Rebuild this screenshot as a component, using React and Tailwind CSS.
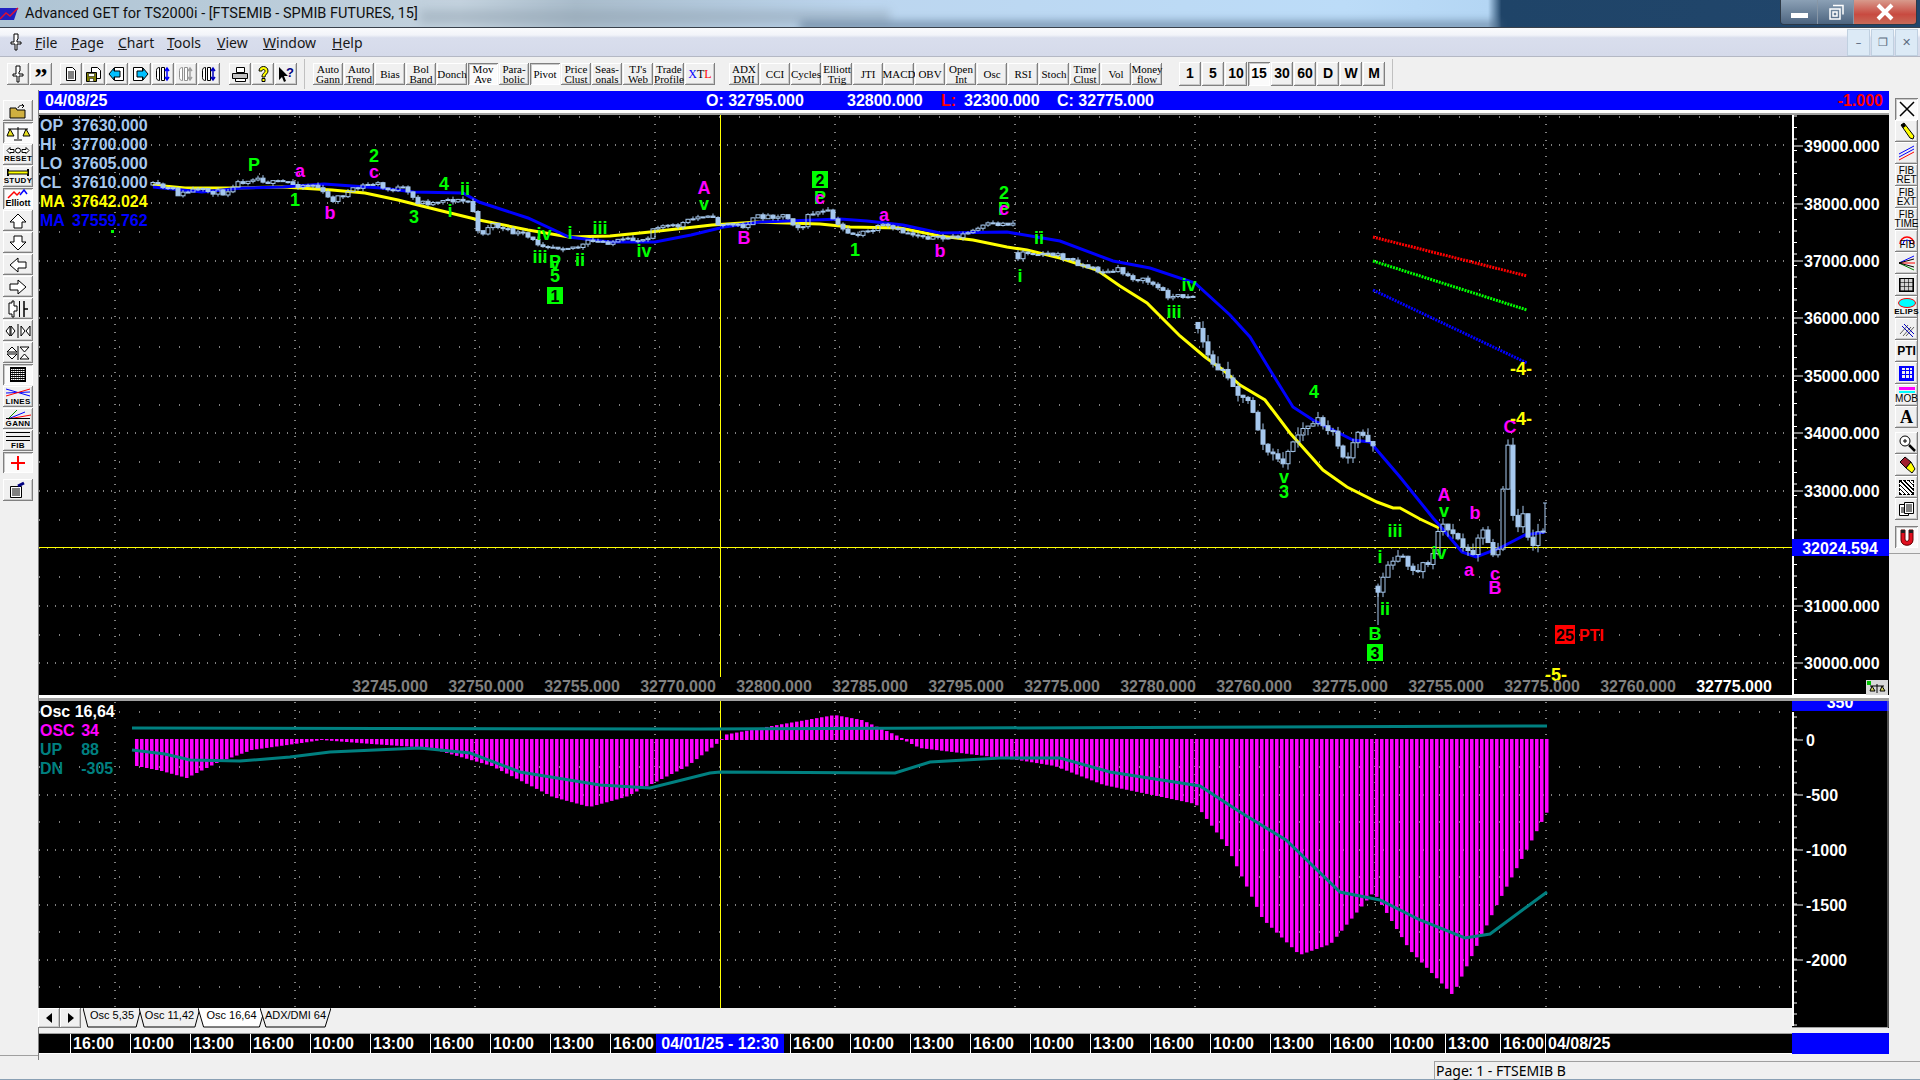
import React from "react";

const raised = "flex items-center justify-center bg-[#f0f0f0] shadow-[inset_-1px_-1px_0_#808080,inset_1px_1px_0_#ffffff,inset_-2px_-2px_0_#c8c8c8]";
const sunken = "flex items-center justify-center bg-[#fbfbfb] shadow-[inset_1px_1px_0_#808080,inset_-1px_-1px_0_#ffffff,inset_2px_2px_0_#c8c8c8]";

// price path of the candles, page pixels
const pricePath = [
  [153,185],[173,190],[179,195],[193,190],[226,193],[232,185],[255,177],[271,183],[287,182],[295,185],[316,185],[326,197],[332,200],[349,192],[365,185],[377,183],[385,190],[402,188],[412,197],[418,202],[434,203],[442,199],[471,202],[475,220],[479,237],[491,223],[504,230],[524,235],[536,243],[557,247],[581,247],[587,242],[610,242],[646,239],[655,225],[675,227],[695,218],[708,214],[716,223],[744,226],[757,217],
  [785,215],[793,223],[802,228],[810,213],[830,212],[835,223],[840,228],[855,235],[867,232],[883,226],[903,232],[940,239],[963,235],[987,225],[1014,223],[1015,263],[1022,252],[1043,253],[1055,255],[1070,260],[1090,268],[1107,273],[1118,270],[1130,277],[1150,282],[1170,297],[1194,295],
  [1195,323],[1200,332],[1205,348],[1210,360],[1215,368],[1225,372],[1230,378],[1235,390],[1240,397],[1250,403],[1255,417],[1260,437],[1265,450],[1270,453],[1275,457],[1280,462],[1285,462],[1290,447],[1295,438],[1300,432],[1305,427],[1310,427],[1315,420],[1320,420],[1325,430],[1330,428],[1335,437],[1340,450],[1345,460],[1350,460],[1355,433],[1360,433],[1365,437],[1375,447],
  [1376,598],[1380,583],[1390,563],[1400,552],[1406,565],[1417,573],[1421,563],[1431,563],[1435,542],[1441,523],[1447,530],[1455,533],[1462,545],[1472,557],[1476,538],[1484,530],[1490,547],[1496,562],[1500,532],[1506,445],[1511,443],[1513,517],[1517,528],[1525,506],[1529,547],[1535,547],[1539,527],[1545,532],
];
const yellowLine = [[153,185],[185,188],[230,188],[283,187],[332,190],[365,193],[398,200],[438,210],[479,220],[528,230],[569,237],[610,236],[650,232],[712,225],[757,222],[820,224],[850,227],[900,228],[940,236],[973,240],[1007,247],[1027,250],[1060,258],[1097,270],[1120,286],[1147,303],[1180,336],[1205,357],[1223,370],[1240,385],[1265,400],[1290,433],[1323,470],[1347,487],[1377,502],[1393,508],[1400,508],[1420,519],[1439,528]];
const blueLine = [[153,187],[202,192],[242,188],[283,187],[324,184],[381,188],[414,192],[463,193],[479,202],[528,218],[569,237],[610,242],[655,242],[691,235],[724,227],[760,222],[840,219],[867,221],[903,225],[940,233],[1007,232],[1060,241],[1113,261],[1150,268],[1195,283],[1230,315],[1250,337],[1270,370],[1293,407],[1313,420],[1353,440],[1370,442],[1400,477],[1433,518],[1441,527],[1462,552],[1476,557],[1500,548],[1525,535],[1545,532]];
const oscBottom = [[135,765],[160,770],[185,777],[195,772],[215,762],[250,749],[300,742],[320,739],[370,743],[428,747],[490,765],[551,796],[588,806],[624,796],[686,765],[720,739],[722,735],[770,726],[833,715],[860,720],[894,735],[918,747],[1016,759],[1053,765],[1102,784],[1194,803],[1225,845],[1261,918],[1298,954],[1329,943],[1372,891],[1408,949],[1451,994],[1494,906],[1547,808]];
const tealLow = [[132,750],[165,754],[190,760],[240,761],[290,757],[330,752],[420,748],[470,753],[520,772],[600,785],[650,788],[710,773],[720,772],[895,773],[930,762],[1000,758],[1060,758],[1110,772],[1200,786],[1240,812],[1286,840],[1340,892],[1380,900],[1420,920],[1465,938],[1490,934],[1547,892]];

const interp = (pts, x) => {
  for (let i = 1; i < pts.length; i++) {
    if (x <= pts[i][0]) {
      const [x0, y0] = pts[i - 1];
      const [x1, y1] = pts[i];
      return y0 + ((y1 - y0) * (x - x0)) / (x1 - x0);
    }
  }
  return pts[pts.length - 1][1];
};
const toPoints = (pts) => pts.map((p) => p.join(",")).join(" ");

let seed = 11;
const rnd = () => {
  seed = (seed * 16807) % 2147483647;
  return seed / 2147483647;
};

// the price opens away from the last close at these candles
const gapCandles = [1018, 1198, 1378];

const candles = [];
for (let x = 153, prev = 185; x <= 1545; x += 5) {
  const close = interp(pricePath, x) + (rnd() - 0.5) * 5;
  const open = gapCandles.includes(x) ? close - 6 : prev;
  const up = close < open;
  const top = Math.min(open, close);
  const bottom = Math.max(open, close);
  const scale = x > 1195 ? 8 : 3;
  candles.push({ x, up, top, bottom, hi: top - rnd() * scale, lo: bottom + rnd() * scale });
  prev = close;
}

const oscBars = [];
for (let x = 135; x <= 1545; x += 5) oscBars.push({ x, y: interp(oscBottom, x) });

const waveLabels = [
  ["P",254,165,"#00ff00"],["a",300,171,"#ff00ff"],["1",295,200,"#00ff00"],["2",374,156,"#00ff00"],["c",374,172,"#ff00ff"],["b",330,213,"#ff00ff"],["3",414,217,"#00ff00"],["4",444,184,"#00ff00"],["ii",465,189,"#00ff00"],["i",450,211,"#00ff00"],["iv",544,234,"#00ff00"],["i",570,233,"#00ff00"],["iii",540,257,"#00ff00"],["P",555,262,"#00ff00"],["v",555,264,"#00ff00"],["5",555,276,"#00ff00"],["ii",580,260,"#00ff00"],["iii",600,228,"#00ff00"],["iv",644,251,"#00ff00"],["A",704,188,"#ff00ff"],["v",704,204,"#00ff00"],["B",744,238,"#ff00ff"],
  ["P",820,198,"#00ff00"],["c",820,198,"#ff00ff"],["a",884,215,"#ff00ff"],["1",855,250,"#00ff00"],["b",940,251,"#ff00ff"],["2",1004,193,"#00ff00"],["P",1004,209,"#00ff00"],["c",1004,209,"#ff00ff"],["ii",1039,238,"#00ff00"],["i",1020,276,"#00ff00"],["iv",1189,285,"#00ff00"],["iii",1174,312,"#00ff00"],
  ["4",1314,392,"#00ff00"],["v",1284,477,"#00ff00"],["3",1284,492,"#00ff00"],["A",1444,495,"#ff00ff"],["v",1444,511,"#00ff00"],["b",1475,513,"#ff00ff"],["C",1510,427,"#ff00ff"],
  ["iii",1395,531,"#00ff00"],["i",1380,557,"#00ff00"],["iv",1439,553,"#00ff00"],["a",1469,570,"#ff00ff"],["c",1495,574,"#ff00ff"],["B",1495,588,"#ff00ff"],["ii",1385,609,"#00ff00"],["B",1375,634,"#00ff00"],
  ["-4-",1521,369,"#ffff00"],["-4-",1521,419,"#ffff00"],["-5-",1556,675,"#ffff00"],
];
const priceRow = ["32745","32750","32755","32770","32800","32785","32795","32775","32780","32760","32775","32755","32775","32760"];
const gridX = [115, 295, 475, 655, 835, 1015, 1195, 1375, 1546];

const Grid = ({ majors, minors, top, bottom }) => (
  <g stroke="#ffffff" strokeWidth="1">
    {majors.map((y) => <line key={y} x1="39" x2="1790" y1={y} y2={y} strokeDasharray="1 7" />)}
    {minors.map((y) => <line key={y} x1="39" x2="1790" y1={y} y2={y} strokeDasharray="1 19" />)}
    {gridX.map((x) => <line key={x} x1={x} x2={x} y1={top} y2={bottom} strokeDasharray="1 7" />)}
  </g>
);

const MainChart = () => (
  <svg width="1753" height="580" viewBox="39 115 1753 580" className="block bg-black font-bold text-[16px]">
    <Grid majors={[145,203,261,318,376,433,491,548,606,663]} minors={[117,174,232,290,347,405,462,520,577,635]} top={116} bottom={677} />
    <line x1="720.5" x2="720.5" y1="115" y2="677" stroke="#ffff00" />
    <line x1="39" x2="1792" y1="547.5" y2="547.5" stroke="#ffff00" />
    <polyline points="1373,237 1527,276" fill="none" stroke="#ff0000" strokeWidth="3" strokeDasharray="2 1" />
    <polyline points="1373,261 1527,310" fill="none" stroke="#00ff00" strokeWidth="3" strokeDasharray="2 1" />
    <polyline points="1373,290 1527,363" fill="none" stroke="#0000ff" strokeWidth="3" strokeDasharray="2 1" />
    <polyline points={toPoints(yellowLine)} fill="none" stroke="#ffff00" strokeWidth="3" />
    <polyline points={toPoints(blueLine)} fill="none" stroke="#0000ff" strokeWidth="3" />
    {candles.map((c) => (
      <g key={c.x} stroke="#a6c8ee">
        <line x1={c.x} x2={c.x} y1={c.hi} y2={c.top} />
        <line x1={c.x} x2={c.x} y1={c.bottom} y2={c.lo} />
        <rect x={c.x - 2} y={c.top} width="4" height={Math.max(c.bottom - c.top, 1)} fill={c.up ? "none" : "#a6c8ee"} />
      </g>
    ))}
    <line x1="1378" x2="1378" y1="590" y2="625" stroke="#a6c8ee" />
    <path d="M1545 532V503M1543 503H1547" stroke="#a6c8ee" fill="none" />
    {waveLabels.map(([t, x, y, fill], i) => (
      <text key={i} x={x} y={y} fill={fill} textAnchor="middle" dominantBaseline="central" className="text-[18px]">{t}</text>
    ))}
    <rect x="547" y="287" width="16" height="17" fill="#00ff00" />
    <text x="555" y="296" textAnchor="middle" dominantBaseline="central" fill="#000000">1</text>
    <rect x="812" y="171" width="16" height="17" fill="#00ff00" />
    <text x="820" y="180" textAnchor="middle" dominantBaseline="central" fill="#000000">2</text>
    <rect x="1367" y="644" width="16" height="17" fill="#00ff00" />
    <text x="1375" y="653" textAnchor="middle" dominantBaseline="central" fill="#000000">3</text>
    <rect x="1555" y="625" width="20" height="19" fill="#ff0000" />
    <text x="1565" y="635" textAnchor="middle" dominantBaseline="central" fill="#000000">25</text>
    <text x="1579" y="635" dominantBaseline="central" fill="#ff0000">PTI</text>
    <rect x="111" y="230" width="3" height="3" fill="#00ff00" />
    {priceRow.map((p, i) => (
      <text key={i} x={390 + i * 96} y="686" fill="#808080" textAnchor="middle" dominantBaseline="central">{p}.000</text>
    ))}
    <text x="1734" y="686" fill="#ffffff" textAnchor="middle" dominantBaseline="central">32775.000</text>
  </svg>
);

const AxisTicks = ({ from, to, step, major }) => {
  const out = [];
  for (let y = from; y <= to; y += step) out.push(y);
  return (
    <g stroke="#ffffff">
      {out.map((y) => <line key={y} x1="1793" x2="1797" y1={y} y2={y} />)}
      {major.map((y) => <line key={y} x1="1793" x2="1803" y1={y} y2={y} />)}
    </g>
  );
};

const MainAxis = () => (
  <svg width="97" height="580" viewBox="1792 115 97 580" className="block bg-black font-bold text-[16px]">
    <line x1="1793" x2="1793" y1="115" y2="695" stroke="#ffffff" strokeWidth="2" />
    <AxisTicks from={116} to={690} step={11.5} major={[146,204,261,318,376,433,491,606,663]} />
    {[[39000,146],[38000,204],[37000,261],[36000,318],[35000,376],[34000,433],[33000,491],[31000,606],[30000,663]].map(([v, y]) => (
      <text key={v} x="1804" y={y} fill="#ffffff" dominantBaseline="central">{v}.000</text>
    ))}
    <rect x="1792" y="539" width="97" height="17" fill="#0000ff" />
    <text x="1840" y="548" fill="#ffffff" textAnchor="middle" dominantBaseline="central">32024.594</text>
    <line x1="1792" x2="1866" y1="694.5" y2="694.5" stroke="#ffffff" />
    <rect x="1866" y="680" width="22" height="15" fill="#d8d8d8" />
    <rect x="1867" y="681" width="4" height="4" fill="#00c000" />
    <path d="M1870 686h14M1877 684v9M1872 686l-2 5h5zM1882 686l-2 5h5z" stroke="#000000" fill="#d0d060" strokeWidth="1" />
  </svg>
);

const OscChart = () => (
  <svg width="1753" height="307" viewBox="39 701 1753 307" className="block bg-black">
    <Grid majors={[795,850,905,960]} minors={[712,767,822,877,932,987]} top={702} bottom={1007} />
    <line x1="720.5" x2="720.5" y1="701" y2="1008" stroke="#ffff00" />
    {oscBars.map((b) => (
      <rect key={b.x} x={b.x} y={Math.min(739, b.y)} width="3.5" height={Math.abs(b.y - 739) + 1} fill="#ff00ff" />
    ))}
    <polyline points="132,728 700,729 1547,726" fill="none" stroke="#008080" strokeWidth="3" />
    <polyline points={toPoints(tealLow)} fill="none" stroke="#008080" strokeWidth="3" />
  </svg>
);

const OscAxis = () => (
  <svg width="97" height="327" viewBox="1792 701 97 327" className="block bg-black font-bold text-[16px]">
    <rect x="1792" y="701" width="97" height="10" fill="#0000ff" />
    <text x="1840" y="708" fill="#ffffff" textAnchor="middle">350</text>
    <line x1="1793" x2="1793" y1="712" y2="1026" stroke="#ffffff" strokeWidth="2" />
    <AxisTicks from={717} to={1025} step={11} major={[740,795,850,905,960]} />
    {[[0,740],[-500,795],[-1000,850],[-1500,905],[-2000,960]].map(([v, y]) => (
      <text key={v} x="1806" y={y} fill="#ffffff" dominantBaseline="central">{v}</text>
    ))}
    <path d="M1792 1027.5H1888V701" fill="none" stroke="#a0a0a0" />
  </svg>
);

const Ico = ({ children, w = 18, h = 16, vb }) => (
  <svg width={w} height={h} viewBox={vb || `0 0 ${w} ${h}`} className="block shrink-0">{children}</svg>
);
const PinGlyph = () => (
  <Ico w={12} h={18}><path d="M4 1h4v5l-1 1v2h4v2H7v6H5v-6H1V9h3V7L4 6z" fill="#ffffff" stroke="#000000" /></Ico>
);
const DocGlyph = () => (
  <Ico w={12} h={16}><path d="M1.5 1.5h6l3 3v10h-9z" fill="#ffffff" stroke="#000000" /><path d="M3 6h6M3 8h6M3 10h6M3 12h6" stroke="#000000" /></Ico>
);
const SaveGlyph = () => (
  <Ico><path d="M6.5 1.5h6l3 3v8h-9z" fill="#ffffff" stroke="#000000" /><path d="M1.5 6.5h10v9h-10z" fill="#808000" stroke="#000000" /><path d="M3.5 7.5h6v3h-6zM4.5 12.5h4v3h-4z" fill="#ffffff" stroke="#000000" strokeWidth="0.5" /></Ico>
);
const ArrowDoc = ({ flip }) => (
  <Ico>
    <path d={flip ? "M2.5 1.5h9v13h-9z" : "M6.5 1.5h9v13h-9z"} fill="#ffffff" stroke="#000000" />
    <path d={flip ? "M6 5h6V2l5 6-5 6v-3H6z" : "M12 5H6V2L1 8l5 6v-3h6z"} fill="#00c0ff" stroke="#000000" />
  </Ico>
);
const Columns = ({ c = "#0000ff", muted }) => (
  <Ico>
    <path d="M2.5 4.5c0-2 1-3 3-3v13c-2 0-3-1-3-3z" fill="#ffffff" stroke={muted ? "#909090" : "#000000"} />
    <path d="M7.5 1.5h3v13h-3z" fill="#ffffff" stroke={muted ? "#909090" : "#000000"} />
    <path d="M13 2v12M11 5l2-3 2 3M11 11l2 3 2-3" fill="none" stroke={muted ? "#a0a0a0" : c} strokeWidth="1.5" />
  </Ico>
);
const Printer = () => (
  <Ico><path d="M5.5 1.5h8v5h-8z" fill="#ffffff" stroke="#000000" /><path d="M1.5 7.5h15v5h-15z" fill="#c0c0c0" stroke="#000000" /><path d="M4.5 12.5h10v3h-10z" fill="#ffffff" stroke="#000000" /></Ico>
);
const Help = () => (
  <Ico w={14} h={18}><path d="M3 6c0-6 9-6 9 0 0 3-3 3-3 6H6c0-4 3-4 3-6S6 4 6 6z" fill="#ffff00" stroke="#000000" /><path d="M6 13.500h3v3H6z" fill="#ffff00" stroke="#000000" /></Ico>
);
const HelpCursor = () => (
  <Ico><path d="M2 1v13l3-3 2 5 2-1-2-5h4z" fill="#000000" /><text x="9" y="11" fontSize="13" fontWeight="700" fill="#000080" stroke="none">?</text></Ico>
);

const iconButtons = [
  [<PinGlyph key="a" />, <span key="b" className="font-['Liberation_Serif',serif] font-bold text-[26px] leading-none mt-[9px]">”</span>],
  [<DocGlyph key="a" />, <SaveGlyph key="b" />, <ArrowDoc key="c" />, <ArrowDoc key="d" flip />, <Columns key="e" />, <Columns key="f" muted />, <Columns key="g" c="#0000c0" />],
  [<Printer key="a" />, <Help key="b" />, <HelpCursor key="c" />],
];
const studyGroups = [
  [["Auto","Gann"],["Auto","Trend"],["Bias"],["Bol","Band"],["Donch"],["Mov","Ave",1],["Para-","bolic"],["Pivot",null,1],["Price","Clust"],["Seas-","onals"],["TJ's","Web"],["Trade","Profile"],["XTL"]],
  [["ADX","DMI"],["CCI"],["Cycles"],["Elliott","Trig"],["JTI"],["MACD"],["OBV"],["Open","Int"],["Osc"],["RSI"],["Stoch"],["Time","Clust"],["Vol"],["Money","flow"]],
];
const periods = ["1","5","10","15","30","60","D","W","M"];

const StudyButton = ({ a, b, on }) => (
  <div className={`w-[30px] h-[22px] mr-[1px] flex-col leading-[10px] text-[11px] font-['Liberation_Serif',serif] text-black ${on ? sunken : raised}`}>
    {a === "XTL" ? (
      <span className="text-[12px]"><span className="text-[#0000ff]">X</span>T<span className="text-[#ff0000]">L</span></span>
    ) : (
      <span>{a}</span>
    )}
    {b && <span>{b}</span>}
  </div>
);

const Toolbar = () => (
  <div className="h-[33px] flex items-center bg-[#f0f0f0]">
    <div className="flex w-[60px] pl-[7px]">
      {iconButtons[0].map((ic, i) => <div key={i} className={`w-[22px] h-[22px] mr-[1px] ${raised}`}>{ic}</div>)}
    </div>
    <div className="flex w-[169px]">
      {iconButtons[1].map((ic, i) => <div key={i} className={`w-[22px] h-[22px] mr-[1px] ${raised}`}>{ic}</div>)}
    </div>
    <div className="flex w-[75px]">
      {iconButtons[2].map((ic, i) => <div key={i} className={`w-[22px] h-[22px] mr-[1px] ${raised}`}>{ic}</div>)}
    </div>
    <div className="w-[1px] h-[30px] bg-[#c0c0c0] mr-[8px]" />
    <div className="flex w-[416px]">
      {studyGroups[0].map(([a, b, on]) => <StudyButton key={a} a={a} b={b} on={on} />)}
    </div>
    <div className="flex w-[450px]">
      {studyGroups[1].map(([a, b]) => <StudyButton key={a} a={a} b={b} />)}
    </div>
    <div className="flex">
      {periods.map((p) => (
        <div key={p} className={`w-[22px] h-[24px] mr-[1px] font-bold text-[14px] ${p === "15" ? sunken : raised}`}>{p}</div>
      ))}
    </div>
    <div className="w-[1px] h-[30px] bg-[#c0c0c0] ml-[6px]" />
  </div>
);

const tiny = "text-[8px] leading-[8px] font-bold text-black tracking-[0.3px]";
const LabelIcon = ({ children, label, cls = tiny }) => (
  <div className="flex flex-col items-center">
    {children}
    <span className={cls}>{label}</span>
  </div>
);
const Arrow = ({ d }) => <Ico w={20} h={18}><path d={d} fill="#ffffff" stroke="#000000" /></Ico>;

const leftTools = [
  { el: <Ico w={20} h={16}><path d="M2 5h6l1 2h8v8H2z" fill="#d0b040" stroke="#000000" /><path d="M10 5c1-3 4-3 6-2M14 1l2 2-2 2" fill="none" stroke="#000000" /></Ico> },
  { on: 1, el: <Ico w={26} h={16}><path d="M13 2v12M9 15h8M3 4h20" stroke="#000000" /><path d="M5 4l-3 7h7zM21 4l-3 7h7z" fill="#e8e020" stroke="#000000" /></Ico> },
  { el: <LabelIcon label="RESET"><Ico w={24} h={9}><path d="M1 4.500l3-3v2h4v3H4v1zM23 4.500l-3-3v2h-4v3h4v1z" fill="#ffffff" stroke="#000000" /><circle cx="12" cy="4.500" r="2.500" fill="#ffffff" stroke="#000000" /></Ico></LabelIcon> },
  { el: <LabelIcon label="STUDY"><Ico w={24} h={9}><path d="M2 1v7M22 1v7" stroke="#000000" strokeWidth="2" /><path d="M2 3h20v3H2z" fill="#ffff00" stroke="#000000" /></Ico></LabelIcon> },
  { on: 1, el: <LabelIcon label="Elliott" cls="text-[9px] leading-[9px] font-bold text-black"><Ico w={24} h={10}><path d="M2 9l6-6 3 3 3-3" fill="none" stroke="#ff0000" strokeWidth="1.500" /><path d="M14 6l4-5 3 4" fill="none" stroke="#0000ff" strokeWidth="1.500" /></Ico></LabelIcon> },
  { el: <Arrow d="M10 2l8 8h-4v6H6v-6H2z" /> },
  { el: <Arrow d="M10 16l8-8h-4V2H6v6H2z" /> },
  { el: <Arrow d="M2 9l8-7v4h8v6h-8v4z" /> },
  { el: <Arrow d="M18 9l-8-7v4H2v6h8v4z" /> },
  { el: <Ico w={24} h={18}><path d="M3 3h3V1h2v5h3v5H8v6H6v-3H3z" fill="#ffffff" stroke="#000000" /><path d="M13.500 1v16" stroke="#000000" /><path d="M18 1v8h4M18 9v8" fill="none" stroke="#000000" strokeWidth="1.500" /></Ico> },
  { el: <Ico w={26} h={16}><path d="M13 1v14" stroke="#000000" /><path d="M1 8l4-5v10zM6 3l4 5-4 5zM16 3l4 5-4 5zM25 3l-4 5 4 5z" fill="#ffffff" stroke="#000000" /></Ico> },
  { el: <Ico w={26} h={16}><path d="M13 1v14" stroke="#000000" /><path d="M2 7l5-5 5 5zM2 9h10l-5 5zM15 2h9l-4.500 5zM15 14h9l-4.500-5z" fill="#ffffff" stroke="#000000" /></Ico> },
  { on: 1, el: <div className="w-[16px] h-[15px] border border-black bg-[repeating-linear-gradient(0deg,#000_0_1px,transparent_1px_2px),repeating-linear-gradient(90deg,#fff_0_1px,#888_1px_2px)]" /> },
  { el: <LabelIcon label="LINES"><Ico w={26} h={11}><path d="M1 2l24 7M1 6l24-1" stroke="#0000ff" /><path d="M1 9l24-7" stroke="#ff0000" /></Ico></LabelIcon> },
  { el: <LabelIcon label="GANN"><Ico w={26} h={11}><path d="M3 10L12 1" stroke="#008000" /><path d="M3 10L20 3" stroke="#0000ff" /><path d="M3 10L26 6" stroke="#ff0000" /><path d="M1 9.500h24" stroke="#000000" /></Ico></LabelIcon> },
  { el: <LabelIcon label="FIB"><Ico w={26} h={11}><path d="M1 1.500h24M1 5.500h24M1 9.500h24" stroke="#000000" /></Ico></LabelIcon> },
  { on: 1, el: <Ico w={16} h={16}><path d="M8 1v14M1 8h14" stroke="#ff0000" strokeWidth="2" /></Ico> },
];

const rightTools = [
  { on: 1, el: <Ico w={16} h={16}><path d="M1 1l14 14M15 1L1 15" stroke="#000000" strokeWidth="1.500" /></Ico> },
  { el: <Ico w={16} h={18}><path d="M2 3l3-2 10 13-1 3-3-1z" fill="#ffff00" stroke="#000000" /><path d="M2 3l3-2 2 3-3 2z" fill="#000000" /></Ico> },
  { el: <Ico w={17} h={18}><path d="M1 10L16 2M1 13L16 5" stroke="#0000ff" /><path d="M1 16L16 8" stroke="#ff0000" /></Ico> },
  { el: <span className="flex flex-col items-center text-[10px] leading-[9px] text-black"><span>FIB</span><span>RET</span></span> },
  { el: <span className="flex flex-col items-center text-[10px] leading-[9px] text-black"><span>FIB</span><span>EXT</span></span> },
  { el: <span className="flex flex-col items-center text-[10px] leading-[9px] text-black"><span>FIB</span><span>TIME</span></span> },
  { el: <div className="relative w-[18px] h-[18px]"><Ico w={18} h={18}><path d="M2 12a7 7 0 0 1 14 0" fill="none" stroke="#ff0000" strokeWidth="1.500" /><path d="M5 12a4 4 0 0 1 8 0" fill="none" stroke="#0000ff" /></Ico><span className="absolute left-[2px] top-[8px] text-[10px] leading-[10px] text-black">FIB</span></div> },
  { el: <Ico w={18} h={16}><path d="M1 8L16 1" stroke="#0000ff" /><path d="M1 8h16" stroke="#ff0000" /><path d="M1 8L16 15" stroke="#008000" /><path d="M1 8L16 4M1 8L16 12" stroke="#000000" /></Ico> },
  { el: <div className="w-[15px] h-[14px] border border-black bg-[repeating-linear-gradient(0deg,#606060_0_1px,#e8e8e8_1px_4px),repeating-linear-gradient(90deg,#606060_0_1px,#e8e8e8_1px_4px)] bg-blend-multiply" /> },
  { el: <LabelIcon label="ELIPS"><Ico w={20} h={10}><ellipse cx="10" cy="5" rx="8.500" ry="4.500" fill="#00ffff" stroke="#ff0000" /></Ico></LabelIcon> },
  { el: <Ico w={16} h={16}><path d="M1 13l8-9M4 15l8-9M7 15l8-9" stroke="#606060" /><path d="M3 5l11 11M5 3l10 10" stroke="#0000c0" /></Ico> },
  { el: <span className="font-bold text-[12px] leading-none text-black">PTI</span> },
  { el: <div className="w-[15px] h-[15px] border-2 border-[#0000ff] bg-[repeating-linear-gradient(0deg,#0000ff_0_1px,transparent_1px_4px),repeating-linear-gradient(90deg,#0000ff_0_1px,transparent_1px_4px)]" /> },
  { el: <div className="flex flex-col items-center"><div className="w-[16px] h-[3px] bg-[#ff00ff] mb-[1px]" /><div className="w-[16px] h-[2px] bg-[#00ffff] mb-[1px]" /><span className="text-[10px] leading-[10px] text-black">MOB</span></div> },
  { el: <span className="font-['Liberation_Serif',serif] font-bold text-[18px] leading-none text-black">A</span> },
];
const rightTools2 = [
  { el: <Ico w={18} h={18}><circle cx="7" cy="7" r="5" fill="#ffffff" stroke="#000000" /><path d="M5 7h4M7 5v4" stroke="#000000" /><path d="M11 11l6 6" stroke="#000000" strokeWidth="2.500" /></Ico> },
  { el: <Ico w={18} h={18}><path d="M2 6l5-5 6 5-5 6z" fill="#a02030" stroke="#000000" /><path d="M8 12l5-6 4 7-3 4z" fill="#ffff00" stroke="#000000" /></Ico> },
  { el: <div className="w-[15px] h-[15px] border border-black border-dashed bg-[repeating-linear-gradient(45deg,#000_0_1px,#fff_1px_3px)]" /> },
  { el: <Ico w={17} h={16}><path d="M1.500 3.500h9v11h-9z" fill="#ffffff" stroke="#000000" /><path d="M6.500 1.500h9v11h-9z" fill="#ffffff" stroke="#000000" /><path d="M8 4h6M8 6h6M8 8h6M8 10h6M3 7h3M3 9h3M3 11h3" stroke="#000000" /></Ico> },
];

const RightButton = ({ t }) => (
  <div className={`w-[23px] h-[22px] ${t.on ? sunken : raised}`}>{t.el}</div>
);

const Tab = ({ label, w, active }) => (
  <div className={`relative flex items-center justify-center h-[20px] pb-[5px] text-[11px] text-black ${w}`}>
    <svg width="100%" height="20" viewBox="0 0 60 20" preserveAspectRatio="none" className="absolute inset-0">
      <path d="M0 0L5 19H55L60 0" fill={active ? "#ffffff" : "#f0f0f0"} stroke="#000000" vectorEffect="non-scaling-stroke" />
    </svg>
    <span className="relative">{label}</span>
  </div>
);

const timeCells = [
  ["", "w-[31px]"],
  ...["16:00","10:00","13:00","16:00","10:00","13:00","16:00","10:00","13:00"].map((t) => [t, "w-[60px]"]),
  ["16:00", "w-[46px]"],
  ["04/01/25 - 12:30", "w-[134px]", 1],
  ...["16:00","10:00","13:00","16:00","10:00","13:00","16:00","10:00","13:00","16:00"].map((t) => [t, "w-[60px]"]),
  ["10:00", "w-[55px]"],
  ["13:00", "w-[55px]"],
  ["16:00", "w-[45px]"],
  ["04/08/25", "flex-1"],
];

export default function App() {
  return (
    <div className="w-[1920px] h-[1080px] overflow-hidden flex flex-col bg-[#f0f0f0] font-['Liberation_Sans',sans-serif] text-black">
      {/* title bar */}
      <div className="relative h-[28px] overflow-hidden border-b border-[#39414b] flex items-center bg-[linear-gradient(90deg,#aec4d4_0%,#c3d2de_24%,#a9bccb_30%,#bcd6ef_45%,#bcdcf8_70%,#b4d6f4_77.5%,#1f4468_78.2%,#21466c_100%)]">
        <div className="absolute left-[420px] top-[10px] w-[470px] h-[14px] bg-[#8a9aa8] opacity-40 blur-[5px]" />
        <div className="absolute left-[800px] top-[21px] w-[700px] h-[10px] bg-[#54708c] opacity-60 blur-[4px]" />
        <svg width="22" height="16" viewBox="0 0 22 16" className="relative shrink-0">
          <path d="M0 2h18L14 14H0z" fill="#2020c0" />
          <path d="M0 13l6-6 4 3 8-8" fill="none" stroke="#e01030" strokeWidth="1.500" />
        </svg>
        <span className="relative ml-[3px] text-[14.5px] font-['Roboto',sans-serif] text-[#101010] whitespace-nowrap">Advanced GET for TS2000i - [FTSEMIB - SPMIB FUTURES, 15]</span>
        <div className="relative ml-auto mr-[3px] mb-[3px] flex h-[25px] rounded-b-[4px] border border-[#2c3947] border-t-0 overflow-hidden">
          <div className="w-[37px] flex items-center justify-center border-r border-[#8796a6] bg-[linear-gradient(#8ba0b5,#4d6580)]">
            <div className="w-[17px] h-[5px] mt-[8px] bg-white" />
          </div>
          <div className="w-[36px] flex items-center justify-center border-r border-[#8796a6] bg-[linear-gradient(#8ba0b5,#4d6580)]">
            <svg width="18" height="18" viewBox="0 0 18 18"><path d="M6 2.500h10v9M3 6h10v10H3z" fill="none" stroke="#ffffff" strokeWidth="1.500" /><path d="M6 9h4v4H6z" fill="none" stroke="#ffffff" strokeWidth="1.500" /></svg>
          </div>
          <div className="w-[62px] flex items-center justify-center bg-[linear-gradient(#d89a8c,#c84a40_60%,#c86a58)]">
            <svg width="20" height="18" viewBox="0 0 20 18"><path d="M3 2l14 14M17 2L3 16" stroke="#ffffff" strokeWidth="4" /></svg>
          </div>
        </div>
      </div>

      {/* menu bar */}
      <div className="h-[29px] flex items-center border-b border-[#b4b8c4] bg-[linear-gradient(#fafbfd_0%,#f2f4f9_25%,#d9deed_35%,#d5daea_100%)] text-[14px] font-['Noto_Sans',sans-serif] text-[#181818]">
        <div className="w-[35px] pl-[10px]"><PinGlyph /></div>
        {[["File","w-[36px]"],["Page","w-[47px]"],["Chart","w-[49px]"],["Tools","w-[50px]"],["View","w-[46px]"],["Window","w-[69px]"],["Help","w-[50px]"]].map(([m, w]) => (
          <span key={m} className={w}><span className="underline">{m[0]}</span>{m.slice(1)}</span>
        ))}
        <div className="ml-auto mr-[2px] flex gap-[1px] text-[#5c6c80]">
          {["–","❐","✕"].map((g) => (
            <div key={g} className="w-[23px] h-[27px] flex items-center justify-center border border-[#c0d0e0] bg-[#dceaf6] text-[11px]">{g}</div>
          ))}
        </div>
      </div>

      <Toolbar />

      <div className="flex flex-1 min-h-0">
        {/* left tools */}
        <div className="w-[38px] h-[966px] flex flex-col pl-[3px] pt-[10px] gap-[1px] border-b border-[#a0a0a0] border-r-0">
          {leftTools.map((t, i) => (
            <div key={i} className={`w-[30px] h-[21px] ${t.on ? sunken : raised}`}>{t.el}</div>
          ))}
          <div className={`w-[30px] h-[22px] mt-[5px] ${raised}`}>
            <Ico w={20} h={18}><path d="M2.500 5.500h11v11h-11z" fill="#ffffff" stroke="#000000" /><path d="M4 8h8M4 10h8M4 12h8M4 14h8" stroke="#000000" /><path d="M10 5l6-3" stroke="#000080" strokeWidth="3" /></Ico>
          </div>
        </div>

        {/* chart column */}
        <div className="w-[1851px] flex flex-col border-l border-[#808080]">
          <div className="h-[1px]" />
          <div className="h-[19px] flex items-center bg-[#0000ff] pl-[6px] pr-[6px] font-bold text-[16px] text-white whitespace-nowrap">
            <span className="w-[661px]">04/08/25</span>
            <span className="w-[141px]">O: 32795.000</span>
            <span className="w-[94px]">32800.000</span>
            <span className="w-[23px] text-[#ff0000]">L:</span>
            <span className="w-[93px]">32300.000</span>
            <span>C: 32775.000</span>
            <span className="ml-auto text-[#ff0000]">-1.000</span>
          </div>
          <div className="h-[3px] bg-white" />
          <div className="h-[2px] bg-[#a0a0a0]" />

          <div className="relative flex h-[580px]">
            <MainChart />
            <MainAxis />
            <div className="absolute left-[1px] top-[1px] grid grid-cols-[32px_auto] font-bold text-[16px] leading-[19px] text-[#a6c8ee] whitespace-nowrap">
              <span>OP</span><span>37630.000</span>
              <span>HI</span><span>37700.000</span>
              <span>LO</span><span>37605.000</span>
              <span>CL</span><span>37610.000</span>
              <span className="text-[#ffff00]">MA</span><span className="text-[#ffff00]">37642.024</span>
              <span className="text-[#0000ff]">MA</span><span className="text-[#0000ff]">37559.762</span>
            </div>
          </div>

          <div className="h-[3px] bg-white" />
          <div className="h-[3px] bg-[#a0a0a0]" />

          <div className="flex h-[327px]">
            <div className="w-[1753px] flex flex-col">
              <div className="relative h-[307px]">
                <OscChart />
                <div className="absolute left-[1px] top-[1px] grid grid-cols-[auto_auto] gap-x-[5px] font-bold text-[16px] leading-[19px] whitespace-nowrap">
                  <span className="col-span-2 text-white">Osc 16,64</span>
                  <span className="text-[#ff00ff]">OSC</span><span className="text-[#ff00ff]">34</span>
                  <span className="text-[#008080]">UP</span><span className="text-[#008080]">88</span>
                  <span className="text-[#008080]">DN</span><span className="text-[#008080]">-305</span>
                </div>
              </div>
              <div className="flex h-[20px] items-start">
                <div className={`w-[22px] -ml-[1px] h-[20px] ${raised}`}><span className="w-0 h-0 border-y-[5px] border-y-transparent border-r-[6px] border-r-black" /></div>
                <div className={`w-[21px] h-[20px] ${raised}`}><span className="w-0 h-0 border-y-[5px] border-y-transparent border-l-[6px] border-l-black" /></div>
                <Tab label="Osc 5,35" w="w-[58px] ml-[2px]" />
                <Tab label="Osc 11,42" w="w-[61px] -ml-[2px]" />
                <Tab label="Osc 16,64" w="w-[67px] -ml-[2px]" active />
                <Tab label="ADX/DMI 64" w="w-[71px] -ml-[5px]" />
              </div>
            </div>
            <OscAxis />
          </div>

          <div className="h-[5px]" />

          <div className="flex h-[21px]">
            <div className="w-[1753px] flex bg-black border-t border-[#a0a0a0] border-b border-b-white font-bold text-[16px] leading-[19px] text-white overflow-hidden whitespace-nowrap">
              {timeCells.map(([t, w, hi], i) => (
                <div key={i} className={`${w} ${hi ? "bg-[#0000ff] text-center border-r-[6px] border-r-black" : "border-l border-white pl-[2px]"} ${i === 0 ? "border-l-0" : ""} overflow-hidden shrink-0`}>{t}</div>
              ))}
            </div>
            <div className="w-[97px] bg-[#0000ff]" />
          </div>
        </div>

        {/* right tools */}
        <div className="w-[31px] h-[464px] flex flex-col pl-[6px] pt-[8px] border-b border-[#a0a0a0]">
          {rightTools.map((t, i) => <RightButton key={i} t={t} />)}
          <div className="h-[4px] shrink-0" />
          {rightTools2.map((t, i) => <RightButton key={i} t={t} />)}
          <div className="h-[6px] shrink-0" />
          <div className={`w-[23px] h-[22px] ${sunken}`}>
            <Ico w={16} h={17}><path d="M2 1h4v9c0 3 4 3 4 0V1h4v10c0 7-12 7-12 0z" fill="#e01020" stroke="#600000" /><path d="M2 1h4v3H2zM10 1h4v3h-4z" fill="#202020" /></Ico>
          </div>
        </div>
      </div>

      {/* status bar */}
      <div className="h-[20px] flex items-end border-b border-[#8aa0b4] bg-[#f0f0f0]">
        <div className="ml-[1434px] flex-1 h-[18px] border-t border-l border-[#a0a0a0] pl-[1px] text-[14px] leading-[18px] font-['Noto_Sans',sans-serif] whitespace-nowrap">Page: 1 - FTSEMIB B</div>
      </div>
    </div>
  );
}
